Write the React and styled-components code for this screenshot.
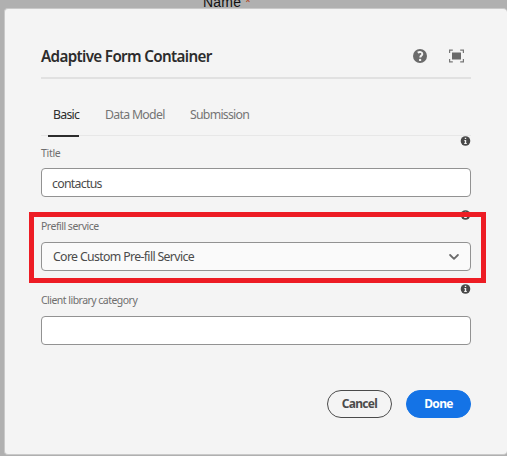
import React from "react";
import styled, { createGlobalStyle } from "styled-components";

const GlobalStyle = createGlobalStyle`
  *, *::before, *::after { box-sizing: border-box; }
  body {
    margin: 0;
    background: #b0b0b0;
    font-family: "Noto Sans", "Open Sans", sans-serif;
    overflow: hidden;
  }
`;

const Page = styled.div`
  position: relative;
  width: 507px;
  height: 456px;
  overflow: hidden;
  background: #b0b0b0;
`;

const Backdrop = styled.div`
  height: 8px;
  padding-left: 203px;
  color: #111;
  font: 14px/16px "Liberation Sans", Arial, sans-serif;
  letter-spacing: 0.2px;
  white-space: nowrap;
`;

const BackdropText = styled.div`
  margin-top: -6px;
  float: left;
`;

const Required = styled.span`
  color: #b4401a;
`;

const Dialog = styled.section`
  position: absolute;
  top: 8px;
  left: 4px;
  width: 503px;
  height: 447px;
  padding: 0 36px 0 36px;
  border: 1px solid #c9c9c9;
  border-right: 0;
  border-radius: 4px;
  background: #f4f4f4;
`;

const Header = styled.header`
  display: flex;
  align-items: center;
  height: 70px;
  padding: 24px 7px 0 0;
  border-bottom: 2px solid #e1e1e1;
`;

const Heading = styled.h1`
  flex: 1;
  margin: 2px 0 0;
  color: #2c2c2c;
  font-size: 15.2px;
  font-weight: 600;
  line-height: 22px;
  letter-spacing: -0.65px;
  white-space: nowrap;
`;

const HeaderTools = styled.div`
  display: flex;
  align-items: center;
  gap: 22px;
  margin-top: 2px;
`;

const Icon = styled.svg`
  display: block;
  flex: none;
`;

const TabStrip = styled.div`
  height: 57px;
  border-bottom: 1px solid #e7e7e7;
`;

const Tabs = styled.nav`
  display: flex;
  height: 58px;
  padding-left: 7px;
`;

const Tab = styled.div`
  width: ${(p) => p.$width}px;
  margin-right: ${(p) => p.$gap || 0}px;
  padding: 27px 0 0 5px;
  border-bottom: 2px solid ${(p) => (p.$active ? "#2c2c2c" : "transparent")};
  color: ${(p) => (p.$active ? "#2c2c2c" : "#747474")};
  font-size: 12.3px;
  line-height: 18px;
  letter-spacing: ${(p) => p.$track}px;
  white-space: nowrap;
`;

const Field = styled.div`
  display: grid;
  grid-template-rows: 10px 22px 29px;
  height: 74px;
`;

const InfoSlot = styled.div`
  justify-self: end;
`;

const Label = styled.label`
  margin-top: ${(p) => p.$lift || 0}px;
  color: #6e6e6e;
  font-size: 10.5px;
  line-height: 14px;
  letter-spacing: ${(p) => p.$track}px;
`;

const Control = styled.div`
  display: flex;
  align-items: center;
  justify-content: space-between;
  height: 29px;
  padding: ${(p) => (p.$select ? 0 : 1)}px 11px 0 ${(p) => (p.$select ? 11 : 10)}px;
  border: 1px solid #929292;
  border-radius: 4px;
  background: ${(p) => (p.$select ? "#fafafa" : "#fff")};
  color: #4b4b4b;
  font-size: 12.3px;
  letter-spacing: ${(p) => p.$track}px;
`;

const Highlight = styled.div`
  position: absolute;
  top: 212px;
  left: 29px;
  width: 457px;
  height: 71px;
  border: 5px solid #ed1c24;
`;

const Footer = styled.footer`
  display: flex;
  justify-content: flex-end;
  gap: 14px;
  margin-top: 32px;
`;

const Button = styled.button`
  width: 65px;
  height: 28px;
  padding: 0 0 1px;
  border: 1px solid ${(p) => (p.$primary ? "#1473e6" : "#4b4b4b")};
  border-radius: 14px;
  background: ${(p) => (p.$primary ? "#1473e6" : "transparent")};
  color: ${(p) => (p.$primary ? "#fff" : "#4b4b4b")};
  font: 700 12px/18px "Noto Sans", sans-serif;
  letter-spacing: -0.7px;
`;

function InfoIcon() {
  return (
    <Icon width="11" height="10" viewBox="0 0 11 10">
      <circle cx="5.5" cy="5" r="4.8" fill="#484848" />
      <path d="M4.2 4h2v3.2h.8v.9H4v-.9h.8V4.8h-.6zM4.8 1.7h1.4V3H4.8z" fill="#f4f4f4" />
    </Icon>
  );
}

function HelpIcon() {
  return (
    <Icon width="14" height="14" viewBox="0 0 14 14">
      <circle cx="7" cy="7" r="7" fill="#6b6b6b" />
      <path d="M4.7 3.7c2.2-1.3 4.6-.7 4.6 1.2 0 1.6-2 1.8-2 3.6" fill="none" stroke="#f4f4f4" strokeWidth="2" />
      <circle cx="7.1" cy="10.9" r="1.2" fill="#f4f4f4" />
    </Icon>
  );
}

function FullscreenIcon() {
  return (
    <Icon width="15" height="14" viewBox="0 0 15 14">
      <path d="M.6 4V1.1h3.2M11.2 1.1h3.2V4M14.4 10v2.9h-3.2M3.8 12.9H.6V10" fill="none" stroke="#777" strokeWidth="1.2" />
      <path d="M3 3.5h9v7H3z" fill="#6b6b6b" />
    </Icon>
  );
}

function Chevron() {
  return (
    <Icon width="10" height="6" viewBox="0 0 10 6">
      <path d="M1.1 1 5 4.8 8.9 1" fill="none" stroke="#6b6b6b" strokeWidth="1.8" strokeLinecap="round" strokeLinejoin="round" />
    </Icon>
  );
}

function FormField({ label, value, select, labelTrack, labelLift, track }) {
  return (
    <Field>
      <InfoSlot><InfoIcon /></InfoSlot>
      <Label $track={labelTrack} $lift={labelLift}>{label}</Label>
      <Control $select={select} $track={track}>
        <span>{value}</span>
        {select && <Chevron />}
      </Control>
    </Field>
  );
}

export default function App() {
  return (
    <Page>
      <GlobalStyle />
      <Backdrop>
        <BackdropText>Name <Required>*</Required></BackdropText>
      </Backdrop>
      <Dialog>
        <Header>
          <Heading>Adaptive Form Container</Heading>
          <HeaderTools>
            <HelpIcon />
            <FullscreenIcon />
          </HeaderTools>
        </Header>
        <TabStrip>
          <Tabs>
            <Tab $active $width={31} $gap={21} $track={-0.75}>Basic</Tab>
            <Tab $width={65} $gap={20} $track={-0.7}>Data Model</Tab>
            <Tab $width={65} $track={-0.75}>Submission</Tab>
          </Tabs>
        </TabStrip>
        <FormField label="Title" value="contactus" labelTrack={-0.3} track={-0.7} />
        <FormField label="Prefill service" value="Core Custom Pre-fill Service" select labelTrack={-0.5} labelLift={-1} track={-0.65} />
        <FormField label="Client library category" labelTrack={-0.53} labelLift={-1} track={0} />
        <Footer>
          <Button>Cancel</Button>
          <Button $primary>Done</Button>
        </Footer>
      </Dialog>
      <Highlight />
    </Page>
  );
}
